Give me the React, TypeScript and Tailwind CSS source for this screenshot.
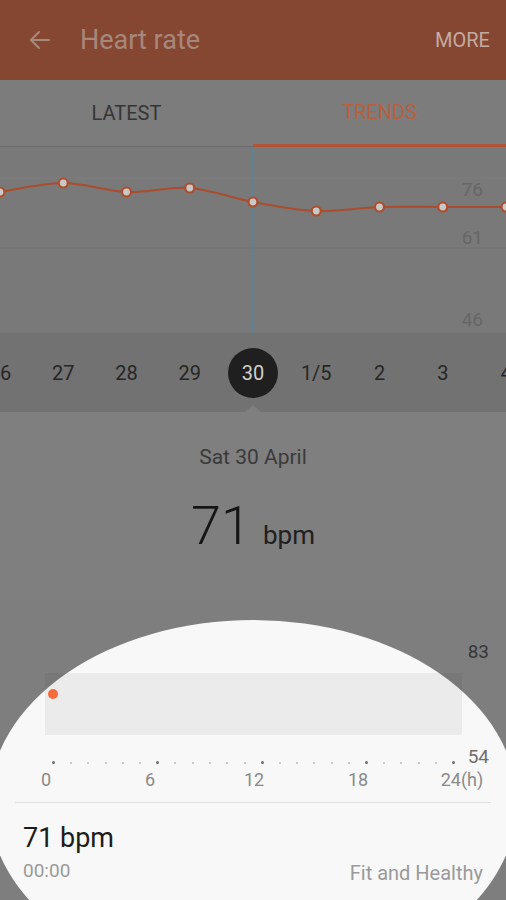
import React from "react";

const xs = [0, 63.25, 126.5, 189.75, 253, 316.25, 379.5, 442.75, 506];
const ys = [45, 36, 45, 41, 55, 64, 60, 60, 60];

function buildPath() {
  const pts = xs.map((x, i) => [x, ys[i]]);
  let d = `M ${pts[0][0]} ${pts[0][1]}`;
  for (let i = 0; i < pts.length - 1; i++) {
    const p0 = pts[Math.max(0, i - 1)];
    const p1 = pts[i];
    const p2 = pts[i + 1];
    const p3 = pts[Math.min(pts.length - 1, i + 2)];
    const c1x = p1[0] + (p2[0] - p0[0]) / 6;
    const c1y = p1[1] + (p2[1] - p0[1]) / 6;
    const c2x = p2[0] - (p3[0] - p1[0]) / 6;
    const c2y = p2[1] - (p3[1] - p1[1]) / 6;
    d += ` C ${c1x} ${c1y} ${c2x} ${c2y} ${p2[0]} ${p2[1]}`;
  }
  return d;
}

const days = ["26", "27", "28", "29", "30", "1/5", "2", "3", "4"];

export default function App() {
  const font = { fontFamily: "Roboto, 'Noto Sans', sans-serif" };
  return (
    <div className="relative h-[900px] w-[506px] overflow-hidden bg-[#7f7f7f]" style={font}>
      {/* Header */}
      <div className="flex h-[80px] items-center bg-[#854732] pl-[28px] pr-[16px]">
        <svg width="24" height="24" viewBox="0 0 24 24" fill="none" stroke="#a8897d" strokeWidth="2" strokeLinecap="round" strokeLinejoin="round">
          <path d="M21 12H3" />
          <path d="M11 4l-8 8 8 8" />
        </svg>
        <div className="ml-[28px] text-[27px] leading-[32px] text-[#a8877b]">Heart rate</div>
        <div className="ml-auto text-[20px] leading-[24px] text-[#c4aba1]">MORE</div>
      </div>

      {/* Tabs */}
      <div className="flex h-[67px] bg-[#7c7c7c]">
        <div className="flex flex-1 items-center justify-center border-b border-[#6c6c6c] text-[20px] text-[#353535]">
          LATEST
        </div>
        <div className="flex flex-1 items-center justify-center border-b-[3px] border-[#b0553a] text-[20px] text-[#b5603f]">
          TRENDS
        </div>
      </div>

      {/* Trend chart */}
      <div className="relative h-[186px] bg-[#797979]">
        <svg width="506" height="186" viewBox="0 0 506 186" className="block">
          <line x1="0" y1="31" x2="506" y2="31" stroke="#7f7f7f" strokeWidth="1" />
          <line x1="0" y1="101" x2="506" y2="101" stroke="#727272" strokeWidth="1" />
          <line x1="253" y1="0" x2="253" y2="186" stroke="#5b8296" strokeWidth="2" />
          <path d={buildPath()} fill="none" stroke="#ab4c2d" strokeWidth="2" />
          {xs.map((x, i) => (
            <circle key={i} cx={x} cy={ys[i]} r="4.5" fill="#c8c8c8" stroke="#ad4d2c" strokeWidth="2.2" />
          ))}
        </svg>
        <span className="absolute right-[23px] top-[31px] text-[19px] leading-[24px] text-[#666666]">76</span>
        <span className="absolute right-[23px] top-[79px] text-[19px] leading-[24px] text-[#666666]">61</span>
        <span className="absolute right-[23px] top-[161px] text-[19px] leading-[24px] text-[#666666]">46</span>
      </div>

      {/* Date strip */}
      <div className="relative flex h-[79px] items-center justify-center overflow-hidden bg-[#727272]">
        {days.map((d) => (
          <div key={d} className="flex w-[63.25px] shrink-0 items-center justify-center">
            {d === "30" ? (
              <div className="flex h-[50px] w-[50px] items-center justify-center rounded-full bg-[#1f1f1f] text-[20px] text-[#cfcfcf]">
                30
              </div>
            ) : (
              <span className="text-[20px] text-[#262626]">{d}</span>
            )}
          </div>
        ))}
        <div className="absolute bottom-0 left-1/2 h-0 w-0 -translate-x-1/2 border-b-[7px] border-l-[8px] border-r-[8px] border-b-[#7f7f7f] border-l-transparent border-r-transparent" />
      </div>

      {/* Day summary */}
      <div className="h-[188px] bg-[#7f7f7f] pt-[31px]">
        <div className="text-center text-[21px] leading-[28px] text-[#3a3a3a]">Sat 30 April</div>
        <div className="mt-[28px] flex items-baseline justify-center gap-[12px]">
          <span className="text-[54px] font-light leading-none text-[#151515]">71</span>
          <span className="text-[26px] leading-none text-[#202020]">bpm</span>
        </div>
      </div>

      {/* Spotlight section */}
      <div className="relative h-[300px] overflow-hidden bg-[#f8f8f8]">
        <div className="pr-[17px] pt-[40px] text-right text-[19px] leading-[24px] text-[#6e6e6e]">83</div>
        <div className="relative ml-[45px] mt-[9px] h-[62px] w-[417px] bg-[#ebebeb]">
          <span className="absolute left-[3px] top-[16px] h-[10px] w-[10px] rounded-full bg-[#fa6b3c]" />
        </div>
        <div className="mt-[10px] flex h-[24px] items-end">
          <div className="ml-[52px] flex w-[403px] justify-between pb-[5px]">
            {Array.from({ length: 24 }).map((_, i) => {
              const major = i % 6 === 0 || i === 23;
              return (
                <div key={i} className="flex h-[3px] w-[3px] items-center justify-center">
                  {major ? (
                    <span className="h-[3px] w-[3px] rounded-full bg-[#707070]" />
                  ) : (
                    <span className="h-[2px] w-[2px] rounded-full bg-[#bdbdbd]" />
                  )}
                </div>
              );
            })}
          </div>
          <div className="ml-auto pr-[17px] text-[19px] leading-[24px] text-[#6e6e6e]">54</div>
        </div>
        <div className="ml-[16px] flex gap-[44px] text-[18px] leading-[22px] text-[#8a8a8a]">
          {["0", "6", "12", "18", "24(h)"].map((l) => (
            <span key={l} className="w-[60px] text-center">
              {l}
            </span>
          ))}
        </div>
        <div className="mx-[15px] mt-[11px] h-px bg-[#e2e2e2]" />
        <div className="px-[23px] pt-[19px]">
          <div className="text-[27px] leading-[32px] text-[#1c1c1c]">71 bpm</div>
          <div className="mt-[5px] flex items-end justify-between pr-[-1px]">
            <span className="text-[19px] leading-[24px] text-[#9a9a9a]">00:00</span>
            <span className="translate-y-[2px] text-[20px] leading-[24px] text-[#9a9a9a]">Fit and Healthy</span>
          </div>
        </div>
        {/* coach-mark spotlight overlay */}
        <div className="pointer-events-none absolute left-[-11px] top-[20px] h-[366px] w-[528px] rounded-[50%] shadow-[0_0_0_2000px_rgba(0,0,0,0.49)]" />
      </div>
    </div>
  );
}
